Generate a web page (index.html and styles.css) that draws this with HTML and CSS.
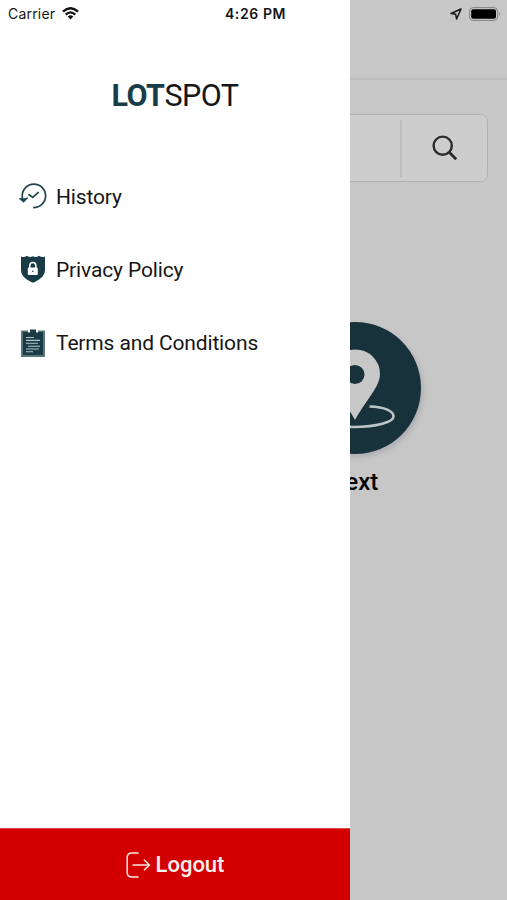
FILE: index.html
```html
<!DOCTYPE html>
<html lang="en">
<head>
<meta charset="utf-8">
<title>LotSpot</title>
<link rel="stylesheet" href="styles.css">
</head>
<body>
<div class="screen">
  <main class="page">
    <header class="page-header"></header>
    <div class="search">
      <div class="search-field"></div>
      <button class="search-button" aria-label="Search">
        <svg width="26" height="26" viewBox="0 0 26 26" fill="none" stroke="#2b2b2d" stroke-width="2.4"><circle cx="10.7" cy="10.7" r="9.1"/><path d="M17 17l7.2 7.2" stroke-width="2.8"/></svg>
      </button>
    </div>
    <div class="spot">
      <div class="spot-circle">
        <svg width="132" height="132" viewBox="0 0 132 132">
          <path d="M51 84C35 85 26 90 26 94.500C26 100 42 105 65 105S104.500 100 104.500 94.500C104.500 89 96 85 80.500 84.500" fill="none" stroke="#bcc6ca" stroke-width="2.600"/>
          <path fill="#c7c7c7" stroke="#18323c" stroke-width="2" d="M66 26.500C51 26.500 40 38 40 52C40 66 55 79 66 100C77 79 92 66 92 52C92 38 81 26.500 66 26.500Z"/>
          <circle cx="66" cy="52.500" r="9.500" fill="#18323c"/>
        </svg>
      </div>
      <div class="spot-label">Text</div>
    </div>
  </main>

  <aside class="drawer">
    <h1 class="brand"><b>LOT</b>SPOT</h1>
    <nav class="menu">
      <a class="menu-item">
        <svg width="28" height="28" viewBox="0 0 28 28" fill="none" stroke="#21414c" stroke-width="1.7"><path d="M3.500 17.500C1.800 8.500 7.500 2.200 15 2.200C21.500 2.200 26.600 7.300 26.600 13.800S21.500 25.600 14.200 25.600"/><path d="M9.500 12.300l4.200 3.200 6-5.400"/><path d="M.2 16.600l4.400 3.600 4.200-4.400-4 1z" fill="#21414c" stroke-width=".8"/></svg>
        <span>History</span>
      </a>
      <a class="menu-item">
        <svg width="28" height="28" viewBox="0 0 28 28"><path fill="#193b46" d="M2 1.500Q5 3 8 .8Q11 3 14 1.300Q17 3 20 .8Q23 3 26 1.500V15C26 21.500 20 25 14 27.800C8 25 2 21.500 2 15Z"/><path d="M10.800 13v-2.500a3 3 0 0 1 6 0V13" fill="none" stroke="#fff" stroke-width="1.500"/><rect x="8.800" y="12.500" width="10" height="7.500" rx="1" fill="#fff"/><circle cx="13.800" cy="16.200" r=".8" fill="#193b46"/></svg>
        <span>Privacy Policy</span>
      </a>
      <a class="menu-item">
        <svg width="28" height="28" viewBox="0 0 28 28"><path fill="#5b737b" d="M2 1.500h24v26.500H2z"/><path fill="#193b46" d="M4 3h20v23H4z"/><path fill="#fff" d="M9 0h10v3.500H9z"/><path fill="#193b46" d="M11 .5h6v3.500h-6z"/><path d="M7 8.500h8M7 11.400h14M7 14.300h12M9 17.200h12M7 20h13M7 22.800h7" fill="none" stroke="#b5c3c8" stroke-width="1.100"/></svg>
        <span>Terms and Conditions</span>
      </a>
    </nav>
    <button class="logout">
      <svg width="25" height="26" viewBox="0 0 25 26" fill="none" stroke="#ffe5e5" stroke-width="1.500"><path d="M12.500 1H6Q1.200 1 1.200 5.500V20.500Q1.200 25 6 25H12.500"/><path d="M6.500 13H23.300M18 7.800l5.400 5.200-5.400 5.200"/></svg>
      <span>Logout</span>
    </button>
  </aside>

  <div class="status">
    <div class="status-left"><span>Carrier</span>
      <svg width="17" height="13" viewBox="0 0 17 13" fill="none" stroke="#111" stroke-width="2.300"><path d="M1 4.700Q8.500-2.300 16 4.700M3.700 7.600Q8.500 3.200 13.300 7.600"/><path fill="#111" stroke="none" d="M5.700 9.500Q8.500 7.200 11.300 9.500L8.500 12.600Z"/></svg>
    </div>
    <div class="status-time">4:26 PM</div>
    <div class="status-right">
      <svg width="12" height="12" viewBox="0 0 12 12" fill="none" stroke="#171717" stroke-width="1.500" stroke-linejoin="round"><path d="M11 1L1 5.500l4.700.8.900 4.700z"/></svg>
      <svg width="32" height="14" viewBox="0 0 32 14"><rect x=".6" y=".6" width="28" height="12.800" rx="3.600" fill="none" stroke="#858585"/><rect x="2.200" y="2.200" width="24.800" height="9.600" rx="2" fill="#000"/><path d="M30 5q2 2 0 4z" fill="#858585"/></svg>
    </div>
  </div>
</div>
</body>
</html>
```

FILE: styles.css
```css
* { box-sizing: border-box; }

body {
  margin: 0;
  font-family: Roboto, "Liberation Sans", sans-serif;
  color: #161616;
}

button {
  margin: 0;
  padding: 0;
  border: 0;
  background: none;
  font: inherit;
}

svg { display: block; flex: none; }

.screen {
  position: relative;
  height: 900px;
  overflow: hidden;
}

.page {
  display: flex;
  flex-direction: column;
  height: 100%;
  background: #c7c7c7;
}

.page-header {
  height: 80px;
  border-bottom: 2px solid #bdbdbd;
}

.search {
  display: flex;
  align-items: center;
  height: 68px;
  margin: 34px 19px 0;
  border: 1.500px solid #b2b2b2;
  border-radius: 7px;
  background: #cdcdcd;
}

.search-field {
  flex: 1;
  height: 57px;
  border-right: 2px solid #bebebe;
}

.search-button {
  display: flex;
  justify-content: center;
  width: 85px;
}

.spot {
  display: flex;
  flex-direction: column;
  align-items: center;
  gap: 12px;
  width: 132px;
  margin: 140px 0 0 289px;
}

.spot-circle {
  width: 132px;
  height: 132px;
  border-radius: 50%;
  background: #18323c;
  box-shadow: 2px 3px 5px rgba(90, 95, 115, .25);
}

.spot-label {
  color: #000;
  font-size: 24px;
  font-weight: 500;
  line-height: 32px;
}

.drawer {
  position: absolute;
  top: 0;
  left: 0;
  display: flex;
  flex-direction: column;
  width: 350px;
  height: 100%;
  background: #fff;
}

.brand {
  margin: 76px 0 0;
  font-size: 30.500px;
  font-weight: 400;
  line-height: 40px;
  letter-spacing: -.55px;
  text-align: center;
}

.brand b { color: #193d48; font-weight: 700; }

.menu {
  display: flex;
  flex-direction: column;
  gap: 45.300px;
  margin-top: 66px;
  padding-left: 19px;
}

.menu-item {
  display: flex;
  align-items: center;
  gap: 9px;
  height: 28px;
  font-size: 21px;
  letter-spacing: -.14px;
}

.menu-item span { padding-top: 1px; }

.logout {
  display: flex;
  align-items: center;
  justify-content: center;
  gap: 5px;
  height: 72px;
  margin-top: auto;
  border-top: 1px solid #dc4a4a;
  background: #d20000;
  color: #fff0f0;
  font-size: 22px;
  font-weight: 500;
}

.status {
  position: absolute;
  top: 0;
  left: 0;
  display: grid;
  grid-template-columns: 1fr auto 1fr;
  align-items: center;
  width: 100%;
  height: 27px;
  padding: 0 6px 0 8px;
  font-family: Inter, sans-serif;
  font-size: 14px;
}

.status-left, .status-right {
  display: flex;
  align-items: center;
  gap: 7px;
}

.status-left { letter-spacing: .2px; }

.status-right { justify-content: flex-end; }

.status-time { font-weight: 600; letter-spacing: .6px; padding-left: 2px; }
```
